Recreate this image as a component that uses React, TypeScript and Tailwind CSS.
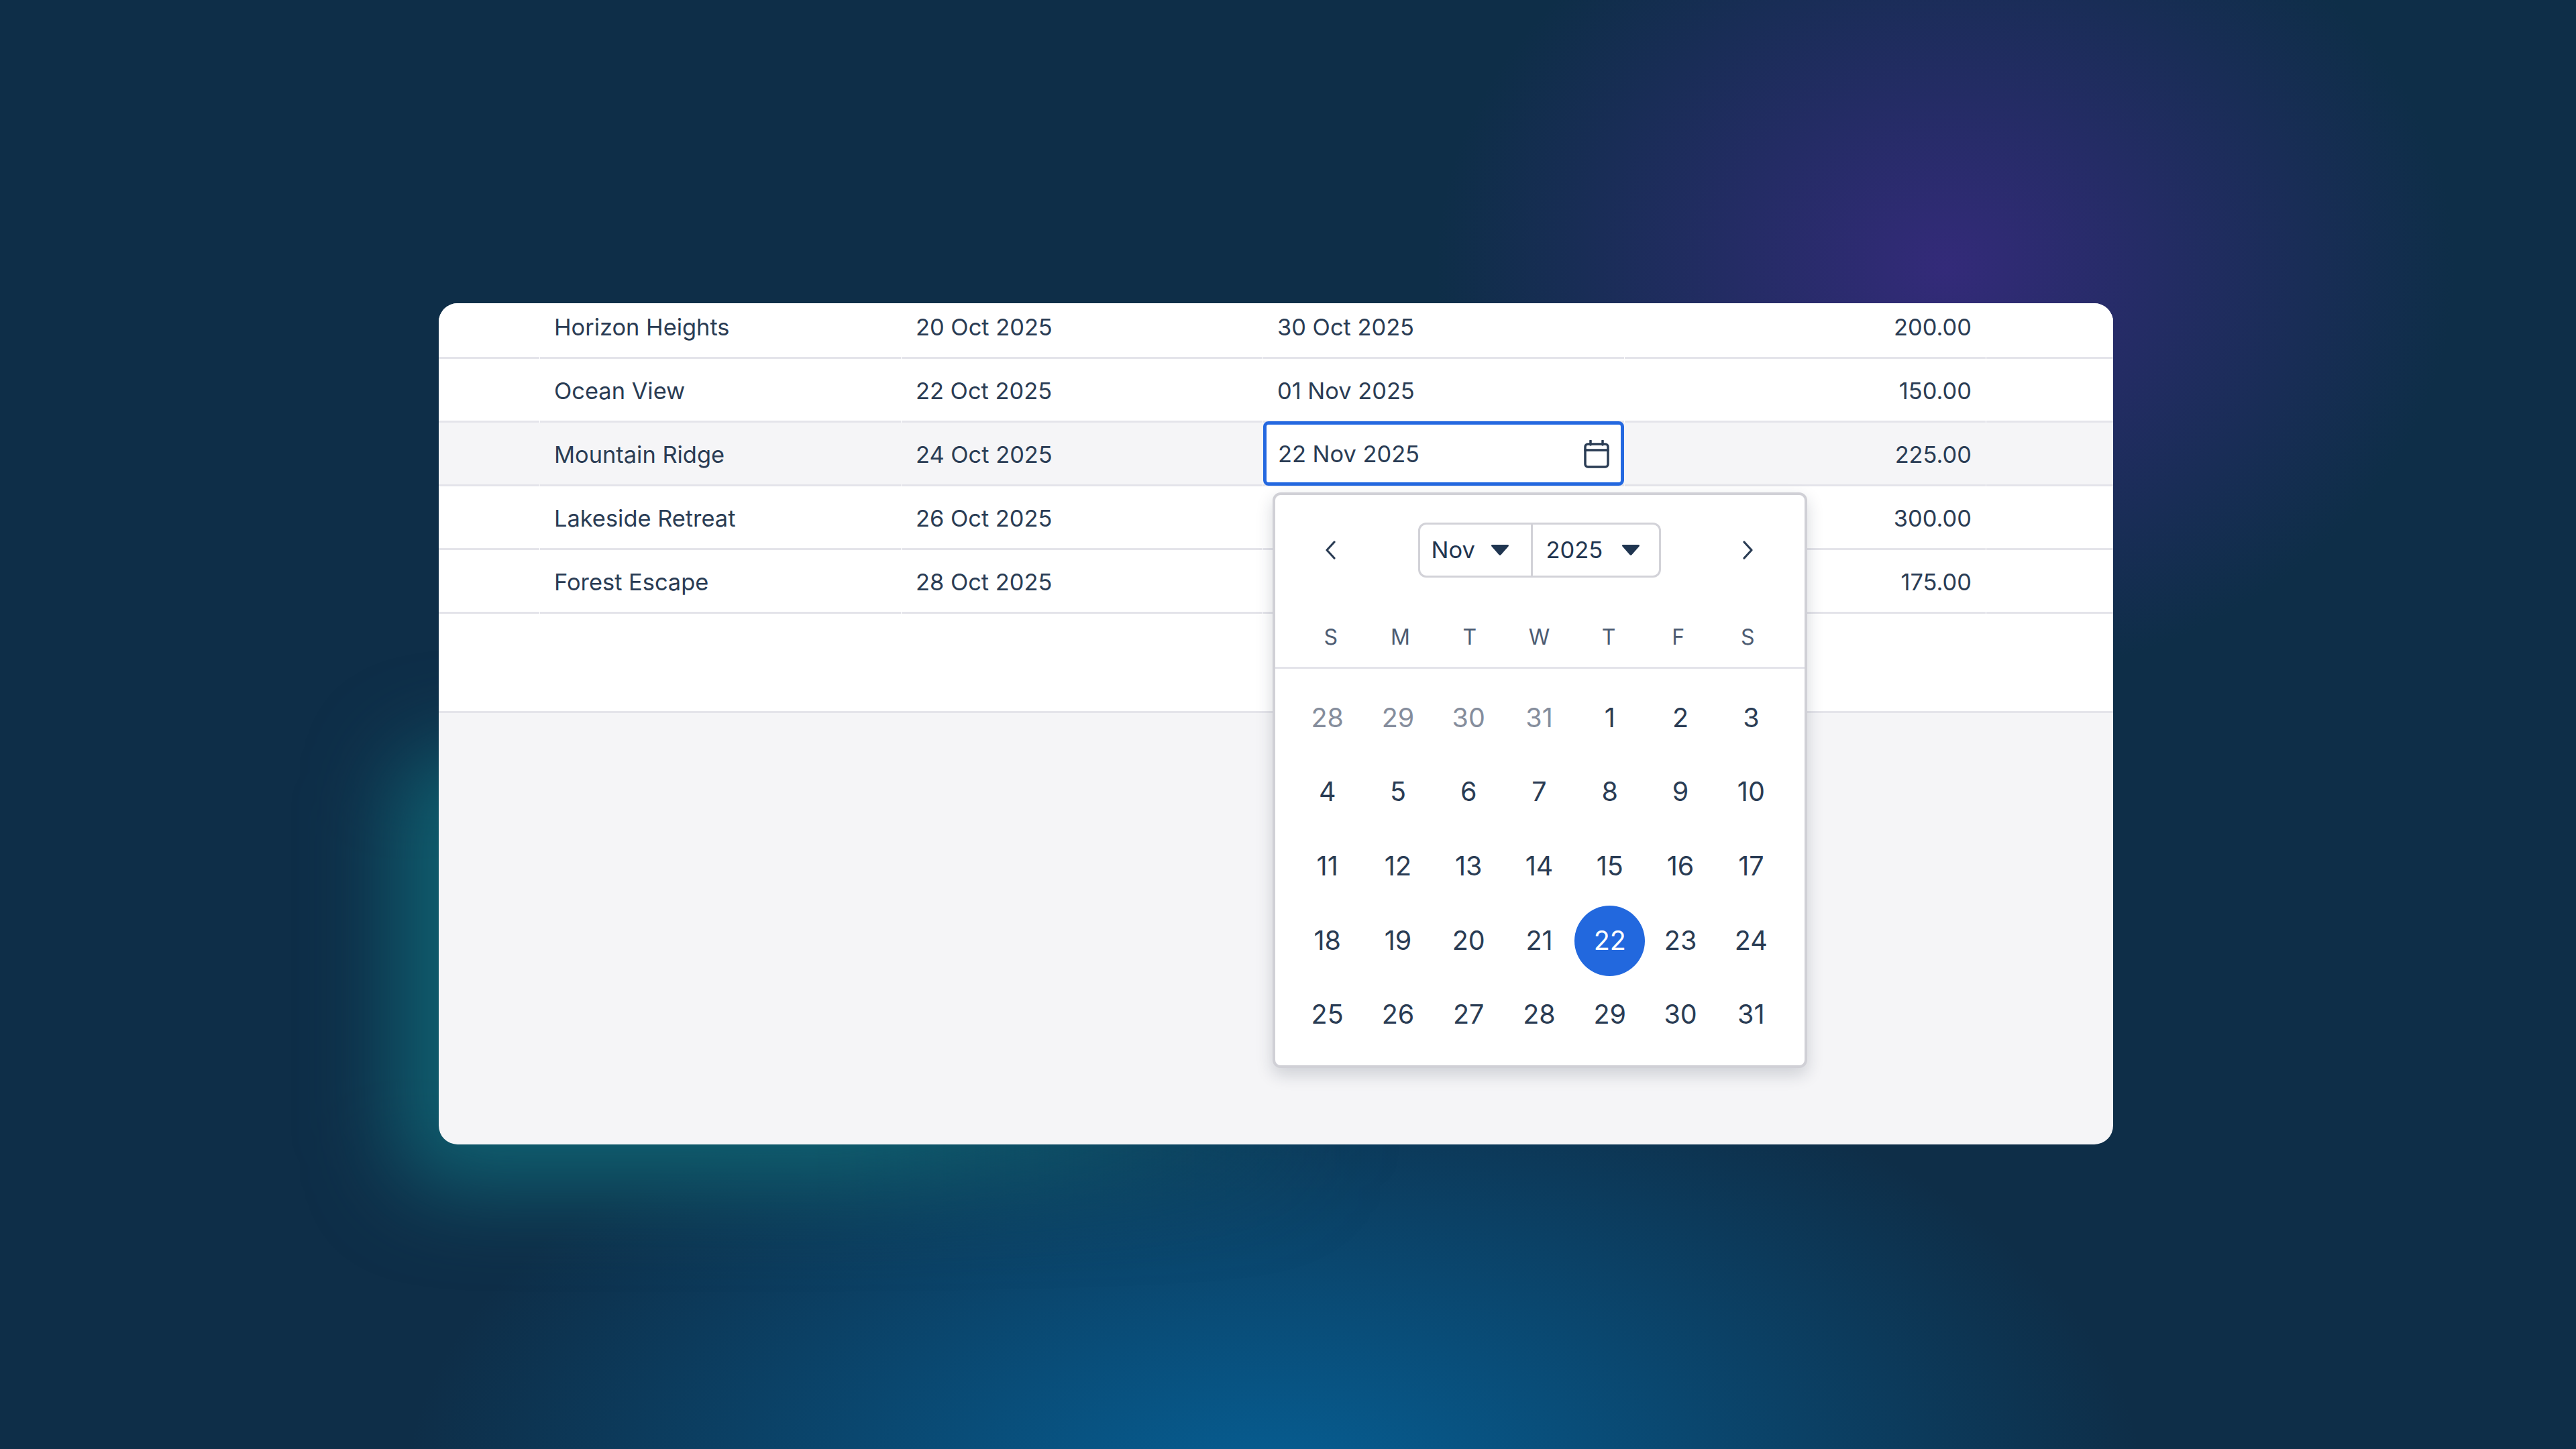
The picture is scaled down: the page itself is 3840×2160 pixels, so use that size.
const rows = [
  { name: 'Horizon Heights', start: '20 Oct 2025', end: '30 Oct 2025', amount: '200.00' },
  { name: 'Ocean View', start: '22 Oct 2025', end: '01 Nov 2025', amount: '150.00' },
  { name: 'Mountain Ridge', start: '24 Oct 2025', end: '22 Nov 2025', amount: '225.00', active: true },
  { name: 'Lakeside Retreat', start: '26 Oct 2025', end: '', amount: '300.00' },
  { name: 'Forest Escape', start: '28 Oct 2025', end: '', amount: '175.00' },
];

const weekdays = ['S', 'M', 'T', 'W', 'T', 'F', 'S'];
const muted = ['28', '29', '30', '31'];
const days = [...muted, ...Array.from({ length: 31 }, (_, i) => String(i + 1))];

const gridCols = 'grid grid-cols-[150px_538px_538px_538px_538px_189px] gap-x-[1px]';
const cell = 'flex items-center border-b-[3px] border-[#e4e4ea] px-[21px] pt-[3px]';

function CalendarIcon() {
  return (
    <svg width="38" height="42" viewBox="0 0 38 42" fill="none" stroke="#2a3c54" strokeWidth="3.5" strokeLinecap="round">
      <rect x="2" y="6" width="34" height="34" rx="4" />
      <path d="M2 15h34M10 1v6M28 1v6" />
    </svg>
  );
}

function Chevron({ dir }: { dir: 'left' | 'right' }) {
  return (
    <svg width="20" height="28" viewBox="0 0 20 28" fill="none" stroke="#2a3c54" strokeWidth="3.2" strokeLinecap="round" strokeLinejoin="round">
      <path d={dir === 'left' ? 'M15 2 4 14l11 12' : 'M5 2l11 12L5 26'} />
    </svg>
  );
}

function Caret() {
  return (
    <svg width="28" height="18" viewBox="0 0 28 18" fill="#1f3550">
      <path d="M2.5 1h23c1.500 0 2 1.500 1 2.600L15.500 16c-.8.900-2.200.900-3 0L1.500 3.600C.500 2.500 1 1 2.500 1z" />
    </svg>
  );
}

function DatePicker() {
  return (
    <div className="absolute left-[1243px] top-[282px] z-10 flex h-[858px] w-[797px] flex-col rounded-[12px] border-[4px] border-[#d0d0d6] bg-white shadow-[0_10px_24px_rgba(30,40,60,0.18)]">
      <div className="flex h-[168px] items-start justify-between pl-[73px] pr-[75px] pt-[41px]">
        <div className="flex h-[82px] items-center"><Chevron dir="left" /></div>
        <div className="flex h-[82px] text-[34.500px] text-[#1f3550]">
          <div className="flex w-[171px] items-center justify-between rounded-l-[12px] border-[3px] border-[#d2d2d8] pl-[17px] pr-[32px]">
            Nov <Caret />
          </div>
          <div className="flex w-[191px] items-center justify-between rounded-r-[12px] border-[3px] border-l-0 border-[#d2d2d8] pl-[20px] pr-[28px]">
            2025 <Caret />
          </div>
        </div>
        <div className="flex h-[82px] items-center"><Chevron dir="right" /></div>
      </div>
      <div className="grid h-[91px] grid-cols-7 items-start border-b-[3px] border-[#e4e4ea] pl-[31px] pr-[33px] pt-[24px] text-center text-[32px] leading-[40px] text-[#4d5c72]">
        {weekdays.map((d, i) => (
          <div key={i}>{d}</div>
        ))}
      </div>
      <div className="grid grid-cols-7 gap-y-[5.600px] pl-[25px] pr-[27px] pt-[21px] text-[39.500px] text-[#2a3c54]">
        {days.map((d, i) => (
          <div key={i} className="flex h-[105px] items-center justify-center">
            <span
              className={
                d === '22'
                  ? 'flex h-[105px] w-[105px] items-center justify-center rounded-full bg-[#2268de] text-white'
                  : i < 4
                    ? 'text-[#858d9c]'
                    : ''
              }
            >
              {d}
            </span>
          </div>
        ))}
      </div>
    </div>
  );
}

export default function App() {
  return (
    <div className="relative h-[2160px] w-[3840px] overflow-hidden bg-[#0e2e48] pl-[654px] pt-[452px] font-['Inter','Liberation_Sans',sans-serif] bg-[radial-gradient(ellipse_760px_620px_at_2900px_400px,rgba(58,42,130,0.85),transparent),radial-gradient(ellipse_1300px_720px_at_1900px_2240px,rgba(6,96,150,1),transparent)]">
      {/* teal glow behind the lower left corner of the card */}
      <div className="absolute left-[590px] top-[1120px] h-[650px] w-[1400px] rounded-[80px] bg-[linear-gradient(90deg,#0f6070_50%,transparent)] blur-[65px]" />
      <div className="relative flex h-[1254px] w-[2496px] flex-col rounded-[28px] bg-[#f5f5f7]">
        <div className="overflow-hidden rounded-t-[28px] bg-white text-[34.400px] text-[#2a3c54]">
          {rows.map((row, index) => {
            const shift = index === 0 ? 'pb-[12px] pt-0' : '';
            return (
              <div key={row.name} className={`${gridCols} ${index === 0 ? 'h-[83px]' : 'h-[95px]'} ${row.active ? 'bg-[#f5f5f7]' : ''}`}>
                <div className="border-b-[3px] border-[#e4e4ea]" />
                <div className={`${cell} ${shift}`}>{row.name}</div>
                <div className={`${cell} ${shift}`}>{row.start}</div>
                {row.active ? (
                  <div className="relative border-b-[3px] border-[#e4e4ea]">
                    <div className="absolute inset-x-0 -top-[2px] bottom-[-2px] flex items-center justify-between rounded-[8px] border-[5px] border-[#2468e0] bg-white pl-[17px] pr-[17px] pt-[2px]">
                      {row.end}
                      <CalendarIcon />
                    </div>
                  </div>
                ) : (
                  <div className={`${cell} ${shift}`}>{row.end}</div>
                )}
                <div className={`${cell} ${shift} justify-end`}>{row.amount}</div>
                <div className="border-b-[3px] border-[#e4e4ea]" />
              </div>
            );
          })}
          <div className="h-[148px] border-b-[3px] border-[#e4e4ea]" />
        </div>
        <DatePicker />
      </div>
    </div>
  );
}
